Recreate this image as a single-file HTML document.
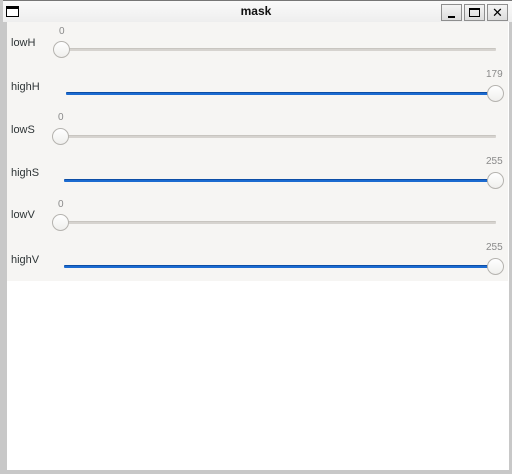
<!DOCTYPE html>
<html><head><meta charset="utf-8"><style>
*{margin:0;padding:0;box-sizing:border-box}
body{width:512px;height:474px;background:#c8c8c8;position:relative;overflow:hidden;font-family:"Liberation Sans",sans-serif}
.a{position:absolute}
.lbl{font-size:11px;color:#2e3436}
.val{font-size:10px;color:#8a8a8a}
.tr{height:3px;border-radius:1px}
.g{background:#d6d3cf;border-top:1px solid #c8c5c0}
.b{background:#1c6bd0;border-top:1px solid #0d4ea6}
.h{width:17px;height:17px;border-radius:50%;background:linear-gradient(#fff,#f0efed);border:1px solid #b5b3af}
.btn{top:4px;width:21px;height:17px;border:1px solid #8e8e8e;background:linear-gradient(#f4f4f4,#dcdcdc)}
</style></head><body>
<div class="a" style="left:3px;top:0;width:509px;height:22px;background:linear-gradient(#fafafa,#eeeeee);border-top:1px solid #777"></div>
<div class="a" style="left:6px;top:6px;width:13px;height:11px;border:1px solid #000;border-top:3px solid #000;background:#fff"></div>
<div class="a" style="left:0;top:4px;width:512px;text-align:center;font-weight:bold;font-size:12px;color:#111">mask</div>
<div class="a btn" style="left:441px"><div class="a" style="left:6px;top:11px;width:7px;height:2px;background:#000"></div></div>
<div class="a btn" style="left:464px"><div class="a" style="left:4px;top:3px;width:11px;height:9px;border:1px solid #000;border-top:2px solid #000"></div></div>
<div class="a btn" style="left:487px"><div class="a" style="left:0;top:0;width:19px;text-align:center;font-size:13px;line-height:15px;color:#000">✕</div></div>
<div class="a" style="left:7px;top:22px;width:502px;height:448px;background:#fff"></div>
<div class="a" style="left:7px;top:22px;width:501px;height:259px;background:#f6f5f3"></div>

<div class="a lbl" style="left:11px;top:37px">lowH</div>
<div class="a val" style="left:59px;top:26px">0</div>
<div class="a tr g" style="left:62px;top:48px;width:434px"></div>
<div class="a h" style="left:53px;top:41px"></div>

<div class="a lbl" style="left:11px;top:81px">highH</div>
<div class="a val" style="left:486px;top:69px">179</div>
<div class="a tr b" style="left:66px;top:92px;width:429px"></div>
<div class="a h" style="left:487px;top:85px"></div>

<div class="a lbl" style="left:11px;top:124px">lowS</div>
<div class="a val" style="left:58px;top:112px">0</div>
<div class="a tr g" style="left:61px;top:135px;width:435px"></div>
<div class="a h" style="left:52px;top:128px"></div>

<div class="a lbl" style="left:11px;top:167px">highS</div>
<div class="a val" style="left:486px;top:156px">255</div>
<div class="a tr b" style="left:64px;top:179px;width:431px"></div>
<div class="a h" style="left:487px;top:172px"></div>

<div class="a lbl" style="left:11px;top:209px">lowV</div>
<div class="a val" style="left:58px;top:199px">0</div>
<div class="a tr g" style="left:61px;top:221px;width:435px"></div>
<div class="a h" style="left:52px;top:214px"></div>

<div class="a lbl" style="left:11px;top:254px">highV</div>
<div class="a val" style="left:486px;top:242px">255</div>
<div class="a tr b" style="left:64px;top:265px;width:431px"></div>
<div class="a h" style="left:487px;top:258px"></div>
</body></html>
